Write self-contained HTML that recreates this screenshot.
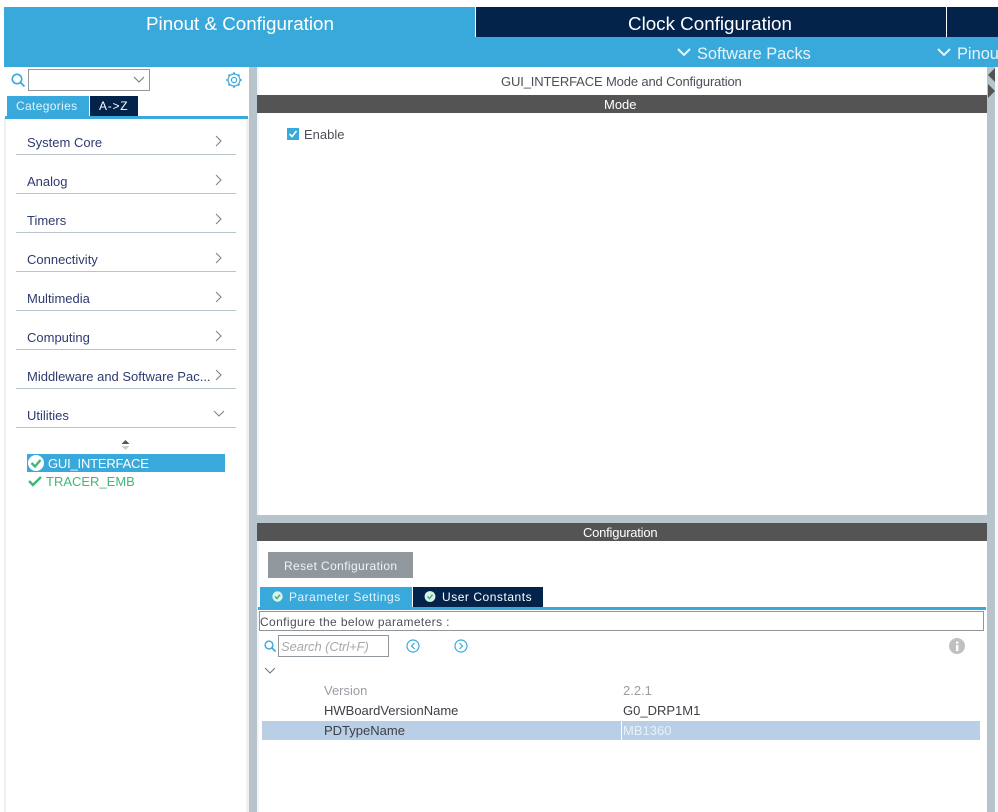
<!DOCTYPE html>
<html><head><meta charset="utf-8"><style>
html,body{margin:0;padding:0;background:#fff}
body{width:998px;height:812px;position:relative;overflow:hidden;font-family:"Liberation Sans",sans-serif}
.a{position:absolute}
.t{position:absolute;white-space:nowrap;font-size:13px;line-height:16px}
.s{font-size:12px}
.h{font-size:18.8px;line-height:22px;color:#fff}
.h2{font-size:16.4px;line-height:20px;color:#e6f4fb}
.cat{color:#2e3a70;left:27px}
.ln{position:absolute;left:16px;width:220px;height:1px;background:#b8c4cb}
svg{position:absolute;overflow:visible}
</style></head><body>
<div class="a" style="left:4px;top:7px;width:994px;height:60px;background:#39a9db"></div>
<div class="a" style="left:476px;top:7px;width:522px;height:30px;background:#03234b"></div>
<div class="a" style="left:946px;top:7px;width:1px;height:30px;background:#fff"></div>
<div class="a" style="left:475px;top:7px;width:1px;height:30px;background:#fff"></div>
<div class="t h" style="left:146px;top:13px">Pinout &amp; Configuration</div>
<div class="t h" style="left:628px;top:13px">Clock Configuration</div>
<svg style="left:677px;top:48px" width="14" height="10"><path d="M1 1L7 7L13 1" fill="none" stroke="#e6f4fb" stroke-width="2"/></svg>
<div class="t h2" style="left:697px;top:44px">Software Packs</div>
<svg style="left:937px;top:48px" width="14" height="10"><path d="M1 1L7 7L13 1" fill="none" stroke="#e6f4fb" stroke-width="2"/></svg>
<div class="t h2" style="left:957px;top:44px">Pinout</div>

<!-- frame strips -->
<div class="a" style="left:4px;top:118px;width:2px;height:694px;background:#f0f0f0"></div>
<div class="a" style="left:246px;top:118px;width:3px;height:694px;background:#f0f0f0"></div>
<div class="a" style="left:249px;top:67px;width:8px;height:745px;background:#b8c4cb"></div>
<div class="a" style="left:257px;top:67px;width:2px;height:745px;background:#f2f4f7"></div>
<div class="a" style="left:257px;top:515px;width:730px;height:8px;background:#b8c4cb"></div>
<div class="a" style="left:987px;top:67px;width:8px;height:745px;background:#b8c4cb"></div>
<div class="a" style="left:995px;top:67px;width:3px;height:745px;background:#f5f7f9"></div>

<!-- sidebar top -->
<svg style="left:11px;top:73px" width="15" height="15"><circle cx="6" cy="6" r="4.7" fill="none" stroke="#39a9db" stroke-width="1.6"/><path d="M9.5 9.5L13.5 13.5" stroke="#39a9db" stroke-width="1.8"/></svg>
<div class="a" style="left:28px;top:69px;width:120px;height:20px;border:1px solid #90989e"></div>
<svg style="left:133px;top:76px" width="12" height="8"><path d="M1 1L6 6L11 1" fill="none" stroke="#777" stroke-width="1"/></svg>
<svg style="left:226px;top:72px" width="16" height="16" viewBox="0 0 16 16"><circle cx="8" cy="8" r="2.6" fill="none" stroke="#39a9db" stroke-width="1.2"/><circle cx="8" cy="8" r="6" fill="none" stroke="#39a9db" stroke-width="1.2"/><path d="M8 .3V2.4M8 13.6V15.7M.3 8H2.4M13.6 8H15.7M2.6 2.6L4 4M12 12L13.4 13.4M2.6 13.4L4 12M12 4L13.4 2.6" stroke="#39a9db" stroke-width="1.8"/></svg>
<div class="a" style="left:7px;top:96px;width:82px;height:20px;background:#39a9db"></div>
<div class="t s" style="left:16px;top:98px;color:#e3f3fb;letter-spacing:.35px">Categories</div>
<div class="a" style="left:90px;top:96px;width:48px;height:20px;background:#03234b"></div>
<div class="t s" style="left:99px;top:98px;color:#fff;letter-spacing:.75px">A-&gt;Z</div>
<div class="a" style="left:5px;top:116px;width:243px;height:3px;background:#39a9db"></div>

<!-- categories -->
<div class="t cat" style="top:135px">System Core</div><div class="ln" style="top:154px"></div>
<div class="t cat" style="top:174px">Analog</div><div class="ln" style="top:193px"></div>
<div class="t cat" style="top:213px">Timers</div><div class="ln" style="top:232px"></div>
<div class="t cat" style="top:252px">Connectivity</div><div class="ln" style="top:271px"></div>
<div class="t cat" style="top:291px">Multimedia</div><div class="ln" style="top:310px"></div>
<div class="t cat" style="top:330px">Computing</div><div class="ln" style="top:349px"></div>
<div class="t cat" style="top:369px">Middleware and Software Pac...</div><div class="ln" style="top:388px"></div>
<div class="t cat" style="top:408px">Utilities</div><div class="ln" style="top:427px"></div>
<svg style="left:215px;top:135px" width="8" height="12"><path d="M1 1L6 6L1 11" fill="none" stroke="#808488" stroke-width="1.1"/></svg>
<svg style="left:215px;top:174px" width="8" height="12"><path d="M1 1L6 6L1 11" fill="none" stroke="#808488" stroke-width="1.1"/></svg>
<svg style="left:215px;top:213px" width="8" height="12"><path d="M1 1L6 6L1 11" fill="none" stroke="#808488" stroke-width="1.1"/></svg>
<svg style="left:215px;top:252px" width="8" height="12"><path d="M1 1L6 6L1 11" fill="none" stroke="#808488" stroke-width="1.1"/></svg>
<svg style="left:215px;top:291px" width="8" height="12"><path d="M1 1L6 6L1 11" fill="none" stroke="#808488" stroke-width="1.1"/></svg>
<svg style="left:215px;top:330px" width="8" height="12"><path d="M1 1L6 6L1 11" fill="none" stroke="#808488" stroke-width="1.1"/></svg>
<svg style="left:215px;top:369px" width="8" height="12"><path d="M1 1L6 6L1 11" fill="none" stroke="#808488" stroke-width="1.1"/></svg>
<svg style="left:213px;top:410px" width="12" height="8"><path d="M1 1L6 6L11 1" fill="none" stroke="#808488" stroke-width="1.1"/></svg>
<svg style="left:121px;top:440px" width="9" height="11"><path d="M4.5 0L8.5 4H.5Z" fill="#555"/><path d="M.5 6H8.5L4.5 10Z" fill="#ccc"/></svg>
<div class="a" style="left:27px;top:454px;width:198px;height:18px;background:#39a9db"></div>
<svg style="left:27px;top:454px" width="18" height="18"><circle cx="9" cy="9" r="8" fill="#fff"/><path d="M4.5 9L8 12.5L13.5 6" fill="none" stroke="#3cb878" stroke-width="2.4"/></svg>
<div class="t" style="left:48px;top:456px;color:#fff;letter-spacing:-.2px">GUI_INTERFACE</div>
<svg style="left:28px;top:475px" width="14" height="12"><path d="M1 6L5 10L13 2" fill="none" stroke="#3cb878" stroke-width="2.4"/></svg>
<div class="t" style="left:46px;top:474px;color:#3cb878">TRACER_EMB</div>

<!-- mode panel -->
<div class="t" style="left:501px;top:74px;color:#4c4f57;letter-spacing:-.14px">GUI_INTERFACE Mode and Configuration</div>
<div class="a" style="left:257px;top:95px;width:730px;height:18px;background:#535453"></div>
<div class="t" style="left:604px;top:97px;color:#fff">Mode</div>
<svg style="left:988px;top:67px" width="7" height="32"><path d="M7 1V15L0 8Z" fill="#535453"/><path d="M0 17V31L7 24Z" fill="#535453"/></svg>
<div class="a" style="left:287px;top:128px;width:12px;height:12px;background:#39a9db"></div>
<svg style="left:287px;top:128px" width="12" height="12"><path d="M2.5 6L5 8.5L9.5 3" fill="none" stroke="#fff" stroke-width="1.6"/></svg>
<div class="t" style="left:304px;top:127px;color:#4c4f57">Enable</div>

<!-- configuration -->
<div class="a" style="left:257px;top:523px;width:730px;height:18px;background:#535453"></div>
<div class="t" style="left:583px;top:525px;color:#fff;letter-spacing:-.23px">Configuration</div>
<div class="a" style="left:268px;top:552px;width:145px;height:26px;background:#90989e"></div>
<div class="t s" style="left:284px;top:558px;color:#f2f3f4;letter-spacing:.39px">Reset Configuration</div>
<div class="a" style="left:260px;top:587px;width:152px;height:20px;background:#39a9db"></div>
<svg style="left:272px;top:591px" width="11" height="11"><circle cx="5.5" cy="5.5" r="5.2" fill="#d9f2e6"/><path d="M3 5.5L5 7.5L8 3.7" fill="none" stroke="#3cb878" stroke-width="1.5"/></svg>
<div class="t s" style="left:289px;top:589px;color:#e3f3fb;letter-spacing:.5px">Parameter Settings</div>
<div class="a" style="left:413px;top:587px;width:130px;height:20px;background:#03234b"></div>
<svg style="left:424px;top:591px" width="12" height="11"><circle cx="6" cy="5.5" r="5.4" fill="#d9f2e6"/><path d="M3.5 5.5L5.5 7.5L8.5 3.7" fill="none" stroke="#3cb878" stroke-width="1.5"/></svg>
<div class="t s" style="left:442px;top:589px;color:#fff;letter-spacing:.53px">User Constants</div>
<div class="a" style="left:258px;top:607px;width:728px;height:3px;background:#39a9db"></div>
<div class="a" style="left:259px;top:611px;width:723px;height:18px;border:1px solid #90989e"></div>
<div class="t s" style="left:260px;top:614px;color:#4c4f57;letter-spacing:.39px">Configure the below parameters :</div>

<svg style="left:264px;top:640px" width="13" height="13"><circle cx="5" cy="5" r="3.9" fill="none" stroke="#39a9db" stroke-width="1.4"/><path d="M8 8L11.5 11.5" stroke="#39a9db" stroke-width="1.6"/></svg>
<div class="a" style="left:278px;top:635px;width:109px;height:20px;border:1px solid #90989e"></div>
<div class="t" style="left:281px;top:639px;color:#a6a9ac;font-style:italic;letter-spacing:-.1px">Search (Ctrl+F)</div>
<svg style="left:406px;top:639px" width="14" height="14"><circle cx="7" cy="7" r="6" fill="none" stroke="#39a9db" stroke-width="1.2"/><path d="M8.5 4L5.5 7L8.5 10" fill="none" stroke="#39a9db" stroke-width="1.2"/></svg>
<svg style="left:454px;top:639px" width="14" height="14"><circle cx="7" cy="7" r="6" fill="none" stroke="#39a9db" stroke-width="1.2"/><path d="M5.5 4L8.5 7L5.5 10" fill="none" stroke="#39a9db" stroke-width="1.2"/></svg>
<svg style="left:949px;top:638px" width="16" height="16"><circle cx="8" cy="8" r="8" fill="#c0c0c0"/><rect x="7" y="7" width="2.4" height="6" fill="#fff"/><rect x="7" y="3.5" width="2.4" height="2.2" fill="#fff"/></svg>
<svg style="left:264px;top:667px" width="12" height="8"><path d="M1 1L6 6L11 1" fill="none" stroke="#707478" stroke-width="1"/></svg>

<div class="t" style="left:324px;top:683px;color:#9a9da2">Version</div>
<div class="t" style="left:623px;top:683px;color:#9a9da2">2.2.1</div>
<div class="t" style="left:324px;top:703px;color:#3c3f46">HWBoardVersionName</div>
<div class="t" style="left:623px;top:703px;color:#3c3f46">G0_DRP1M1</div>
<div class="a" style="left:262px;top:721px;width:718px;height:19px;background:#b8cfe6"></div>
<div class="a" style="left:621px;top:721px;width:1px;height:19px;background:#fff"></div>
<div class="t" style="left:324px;top:723px;color:#3c3f46">PDTypeName</div>
<div class="t" style="left:623px;top:723px;color:#e8f1fa">MB1360</div>
</body></html>
